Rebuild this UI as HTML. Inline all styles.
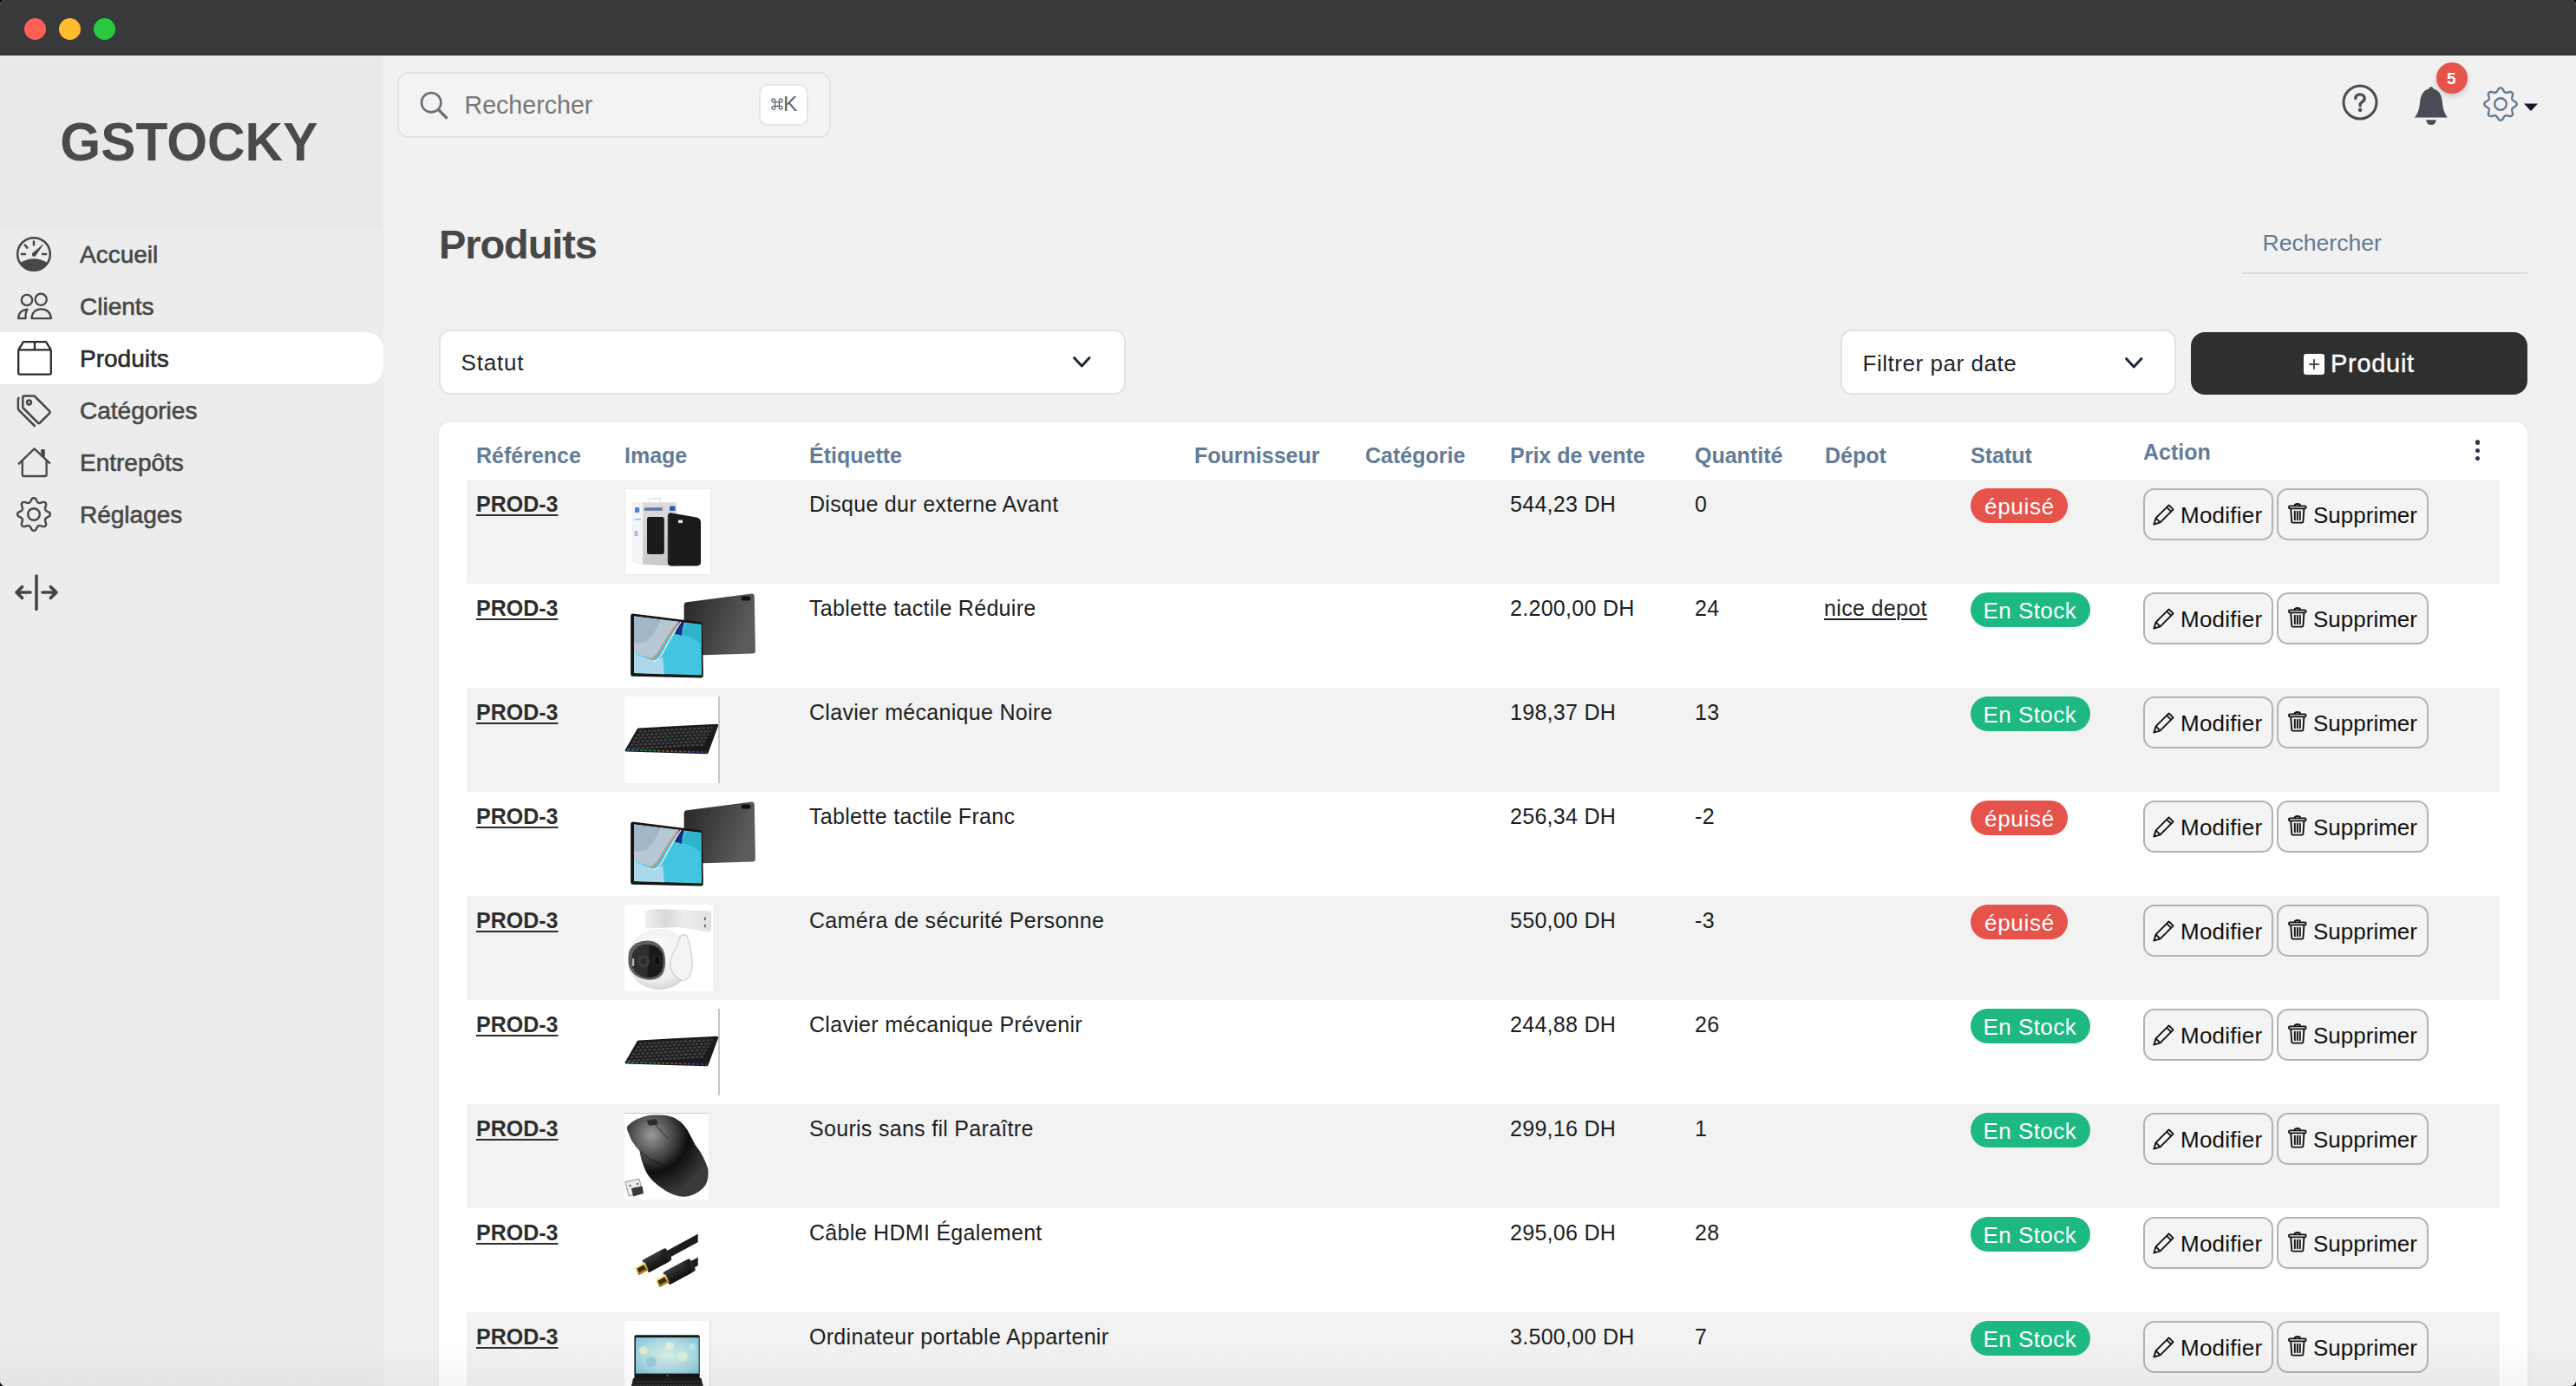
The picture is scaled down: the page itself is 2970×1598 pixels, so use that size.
<!DOCTYPE html>
<html><head><meta charset="utf-8">
<style>
*{box-sizing:border-box;margin:0;padding:0}
html,body{width:2970px;height:1598px;overflow:hidden;background:#000}
body{font-family:"Liberation Sans",sans-serif;position:relative}
.win{position:absolute;left:0;top:0;width:2970px;height:1598px;background:#f1f1f1;border-radius:6px;overflow:hidden}
.a{position:absolute}
.t{position:absolute;white-space:nowrap;line-height:1}
svg{position:absolute;overflow:visible}
.tl{position:absolute;top:21px;width:25px;height:25px;border-radius:50%}
</style></head><body>
<div class="win">
<div class="a" style="left:0;top:0;width:2970px;height:64px;background:#38393b;border-bottom:1px solid #29292b"></div>
<div class="tl" style="left:28px;background:#fe5f57"></div>
<div class="tl" style="left:68px;background:#febc2e"></div>
<div class="tl" style="left:108px;background:#28c840"></div>
<div class="a" style="left:0;top:64px;width:2970px;height:1px;background:#f3f3f3"></div>
<div class="a" style="left:0;top:65px;width:442px;height:1533px;background:#ececec"></div>
<div class="a" style="left:0;top:65px;width:442px;height:198px;background:#e9e9e9"></div>
<div class="t" style="left:69.3px;top:134.4px;font-size:60.3px;font-weight:bold;color:#4a4a4a;transform:scaleY(1.035);transform-origin:0 51px">GSTOCKY</div>
<div class="a" style="left:-20px;top:383px;width:462px;height:60px;background:#fff;border-radius:20px"></div>
<div class="t" style="left:92.0px;top:279.9px;font-size:28px;font-weight:normal;color:#474747;-webkit-text-stroke:0.6px #474747">Accueil</div>
<div class="t" style="left:92.0px;top:339.9px;font-size:28px;font-weight:normal;color:#474747;-webkit-text-stroke:0.6px #474747">Clients</div>
<div class="t" style="left:92.0px;top:399.9px;font-size:28px;font-weight:normal;color:#2b2b2b;-webkit-text-stroke:0.6px #2b2b2b">Produits</div>
<div class="t" style="left:92.0px;top:459.9px;font-size:28px;font-weight:normal;color:#474747;-webkit-text-stroke:0.6px #474747">Catégories</div>
<div class="t" style="left:92.0px;top:519.9px;font-size:28px;font-weight:normal;color:#474747;-webkit-text-stroke:0.6px #474747">Entrepôts</div>
<div class="t" style="left:92.0px;top:579.9px;font-size:28px;font-weight:normal;color:#474747;-webkit-text-stroke:0.6px #474747">Réglages</div>
<svg style="left:19.2px;top:273px" width="40" height="40" viewBox="0 0 40 40" fill="none" stroke="#474747" stroke-width="2.5" stroke-linecap="round">
<circle cx="20" cy="20" r="18.8"/>
<path d="M4.1 30 Q20 20.6 35.9 30 A18.8 18.8 0 0 1 4.1 30 Z" fill="#474747" stroke="none"/>
<circle cx="20" cy="20.8" r="2.1" fill="#474747" stroke="none"/><path d="M18.4 19.6 L21.5 22.1 L30 9.8 Z" stroke-width="1" stroke-linejoin="round" fill="#474747"/>
<path d="M20 5.6 V9.6 M5.8 20 H10 M30 20 H34.2 M9.8 9.5 L12.4 12.6"/>
</svg>
<svg style="left:19.6px;top:333px" width="40" height="40" viewBox="0 0 40 40" fill="none" stroke="#474747" stroke-width="2.3" stroke-linejoin="round">
<circle cx="11" cy="13" r="6.2"/>
<circle cx="27.2" cy="12.3" r="6.6"/>
<path d="M16.6 34.2 C16.6 27.5 21 23.4 27.6 23.4 C34 23.4 38.8 27.5 38.8 34.2 Z"/>
<path d="M1.2 34.2 C1.2 28.2 5 24.2 11.5 23.6 C9.6 26.8 9.2 30.5 9.6 34.2 Z"/>
</svg>
<svg style="left:19.6px;top:393px" width="40" height="40" viewBox="0 0 40 40" fill="none" stroke="#2b2b2b" stroke-width="2.3" stroke-linejoin="round">
<path d="M1.2 10.3 L7 1.2 H33 L38.8 10.3"/>
<rect x="1.2" y="10.3" width="37.6" height="28.3" rx="1.6"/>
<path d="M20 1.2 V10.3"/>
</svg>
<svg style="left:19.6px;top:453px" width="40" height="40" viewBox="0 0 40 40" fill="none" stroke="#474747" stroke-width="2.5" stroke-linejoin="round" stroke-linecap="round">
<path d="M6.3 5 Q6.3 3.5 7.8 3.5 H19.6 L37.2 21.1 Q38.2 22.2 37.2 23.3 L26 34.5 Q24.9 35.5 23.8 34.5 L6.3 17 Z"/>
<circle cx="13.5" cy="11" r="2.4"/>
<path d="M1.5 5.8 Q0.9 6.4 0.9 8 V17.4 Q0.9 19 2.2 20.3 L19.9 38"/>
</svg>
<svg style="left:19.6px;top:513px" width="40" height="40" viewBox="0 0 40 40" fill="none" stroke="#474747" stroke-width="2.3" stroke-linejoin="round" stroke-linecap="round">
<path d="M1.8 21.6 L19.6 4.4 L37.2 20.9"/>
<path d="M5.8 18 V34.6 Q5.8 36 7.2 36 H32.2 Q33.6 36 33.6 34.6 V18"/>
<rect x="27.2" y="5" width="4.6" height="9" rx="1" fill="#474747" stroke="none"/>
</svg>
<svg style="left:19px;top:573px" width="40" height="40" viewBox="0 0 40 40" fill="none" stroke="#474747" stroke-width="2.4" stroke-linejoin="round">
<path d="M20.00 1.10 L20.37 1.13 L20.74 1.21 L21.10 1.35 L21.45 1.54 L21.79 1.79 L22.12 2.09 L22.43 2.46 L22.71 2.91 L22.94 3.54 L23.18 4.01 L23.42 4.43 L23.64 4.82 L23.87 5.18 L24.09 5.51 L24.31 5.81 L24.53 6.07 L24.75 6.31 L24.98 6.50 L25.22 6.66 L25.47 6.79 L25.74 6.88 L26.02 6.93 L26.33 6.96 L26.65 6.95 L26.99 6.92 L27.36 6.86 L27.75 6.78 L28.16 6.69 L28.59 6.58 L29.06 6.45 L29.56 6.29 L30.17 6.00 L30.69 5.88 L31.16 5.84 L31.61 5.85 L32.02 5.92 L32.41 6.03 L32.76 6.19 L33.08 6.39 L33.36 6.64 L33.61 6.92 L33.81 7.24 L33.97 7.59 L34.08 7.98 L34.15 8.39 L34.16 8.84 L34.12 9.31 L34.00 9.83 L33.71 10.44 L33.55 10.94 L33.42 11.41 L33.31 11.84 L33.22 12.25 L33.14 12.64 L33.08 13.01 L33.05 13.35 L33.04 13.67 L33.07 13.98 L33.12 14.26 L33.21 14.53 L33.34 14.78 L33.50 15.02 L33.69 15.25 L33.93 15.47 L34.19 15.69 L34.49 15.91 L34.82 16.13 L35.18 16.36 L35.57 16.58 L35.99 16.82 L36.46 17.06 L37.09 17.29 L37.54 17.57 L37.91 17.88 L38.21 18.21 L38.46 18.55 L38.65 18.90 L38.79 19.26 L38.87 19.63 L38.90 20.00 L38.87 20.37 L38.79 20.74 L38.65 21.10 L38.46 21.45 L38.21 21.79 L37.91 22.12 L37.54 22.43 L37.09 22.71 L36.46 22.94 L35.99 23.18 L35.57 23.42 L35.18 23.64 L34.82 23.87 L34.49 24.09 L34.19 24.31 L33.93 24.53 L33.69 24.75 L33.50 24.98 L33.34 25.22 L33.21 25.47 L33.12 25.74 L33.07 26.02 L33.04 26.33 L33.05 26.65 L33.08 26.99 L33.14 27.36 L33.22 27.75 L33.31 28.16 L33.42 28.59 L33.55 29.06 L33.71 29.56 L34.00 30.17 L34.12 30.69 L34.16 31.16 L34.15 31.61 L34.08 32.02 L33.97 32.41 L33.81 32.76 L33.61 33.08 L33.36 33.36 L33.08 33.61 L32.76 33.81 L32.41 33.97 L32.02 34.08 L31.61 34.15 L31.16 34.16 L30.69 34.12 L30.17 34.00 L29.56 33.71 L29.06 33.55 L28.59 33.42 L28.16 33.31 L27.75 33.22 L27.36 33.14 L26.99 33.08 L26.65 33.05 L26.33 33.04 L26.02 33.07 L25.74 33.12 L25.47 33.21 L25.22 33.34 L24.98 33.50 L24.75 33.69 L24.53 33.93 L24.31 34.19 L24.09 34.49 L23.87 34.82 L23.64 35.18 L23.42 35.57 L23.18 35.99 L22.94 36.46 L22.71 37.09 L22.43 37.54 L22.12 37.91 L21.79 38.21 L21.45 38.46 L21.10 38.65 L20.74 38.79 L20.37 38.87 L20.00 38.90 L19.63 38.87 L19.26 38.79 L18.90 38.65 L18.55 38.46 L18.21 38.21 L17.88 37.91 L17.57 37.54 L17.29 37.09 L17.06 36.46 L16.82 35.99 L16.58 35.57 L16.36 35.18 L16.13 34.82 L15.91 34.49 L15.69 34.19 L15.47 33.93 L15.25 33.69 L15.02 33.50 L14.78 33.34 L14.53 33.21 L14.26 33.12 L13.98 33.07 L13.67 33.04 L13.35 33.05 L13.01 33.08 L12.64 33.14 L12.25 33.22 L11.84 33.31 L11.41 33.42 L10.94 33.55 L10.44 33.71 L9.83 34.00 L9.31 34.12 L8.84 34.16 L8.39 34.15 L7.98 34.08 L7.59 33.97 L7.24 33.81 L6.92 33.61 L6.64 33.36 L6.39 33.08 L6.19 32.76 L6.03 32.41 L5.92 32.02 L5.85 31.61 L5.84 31.16 L5.88 30.69 L6.00 30.17 L6.29 29.56 L6.45 29.06 L6.58 28.59 L6.69 28.16 L6.78 27.75 L6.86 27.36 L6.92 26.99 L6.95 26.65 L6.96 26.33 L6.93 26.02 L6.88 25.74 L6.79 25.47 L6.66 25.22 L6.50 24.98 L6.31 24.75 L6.07 24.53 L5.81 24.31 L5.51 24.09 L5.18 23.87 L4.82 23.64 L4.43 23.42 L4.01 23.18 L3.54 22.94 L2.91 22.71 L2.46 22.43 L2.09 22.12 L1.79 21.79 L1.54 21.45 L1.35 21.10 L1.21 20.74 L1.13 20.37 L1.10 20.00 L1.13 19.63 L1.21 19.26 L1.35 18.90 L1.54 18.55 L1.79 18.21 L2.09 17.88 L2.46 17.57 L2.91 17.29 L3.54 17.06 L4.01 16.82 L4.43 16.58 L4.82 16.36 L5.18 16.13 L5.51 15.91 L5.81 15.69 L6.07 15.47 L6.31 15.25 L6.50 15.02 L6.66 14.78 L6.79 14.53 L6.88 14.26 L6.93 13.98 L6.96 13.67 L6.95 13.35 L6.92 13.01 L6.86 12.64 L6.78 12.25 L6.69 11.84 L6.58 11.41 L6.45 10.94 L6.29 10.44 L6.00 9.83 L5.88 9.31 L5.84 8.84 L5.85 8.39 L5.92 7.98 L6.03 7.59 L6.19 7.24 L6.39 6.92 L6.64 6.64 L6.92 6.39 L7.24 6.19 L7.59 6.03 L7.98 5.92 L8.39 5.85 L8.84 5.84 L9.31 5.88 L9.83 6.00 L10.44 6.29 L10.94 6.45 L11.41 6.58 L11.84 6.69 L12.25 6.78 L12.64 6.86 L13.01 6.92 L13.35 6.95 L13.67 6.96 L13.98 6.93 L14.26 6.88 L14.53 6.79 L14.78 6.66 L15.02 6.50 L15.25 6.31 L15.47 6.07 L15.69 5.81 L15.91 5.51 L16.13 5.18 L16.36 4.82 L16.58 4.43 L16.82 4.01 L17.06 3.54 L17.29 2.91 L17.57 2.46 L17.88 2.09 L18.21 1.79 L18.55 1.54 L18.90 1.35 L19.26 1.21 L19.63 1.13 Z"/>
<circle cx="20" cy="20" r="6.8"/>
</svg>
<svg style="left:0;top:640px" width="100" height="100" viewBox="0 0 100 100" fill="none" stroke="#444" stroke-width="3.6" stroke-linecap="round" stroke-linejoin="round">
<path d="M42 24 V62.5"/>
<path d="M35 43 H19.5 M25.6 36.6 L19 43 L25.6 49.4"/>
<path d="M49 43 H64.5 M58.4 36.6 L65 43 L58.4 49.4"/>
</svg>
<div class="a" style="left:458px;top:83px;width:500px;height:76px;border:2px solid #dfe3e8;border-radius:13px;background:#f3f3f3"></div>
<svg style="left:484px;top:105px" width="34" height="34" viewBox="0 0 34 34" fill="none" stroke="#68717c" stroke-width="2.6" stroke-linecap="round">
<circle cx="13.2" cy="13.2" r="11.2"/><path d="M21.4 21.4 L30.6 30.6" stroke-width="3.4"/></svg>
<div class="t" style="left:535.5px;top:107.2px;font-size:28.6px;font-weight:normal;color:#777;">Rechercher</div>
<div class="a" style="left:875px;top:97px;width:57px;height:48px;border:2px solid #e3e6ea;border-radius:10px;background:#fff"></div>
<svg style="left:889px;top:112.5px" width="14" height="14" viewBox="0 0 14 14" fill="none" stroke="#5b6570" stroke-width="1.3"><path d="M4.6 4.6 V3.2 A1.9 1.9 0 1 0 3.2 4.6 H10.8 A1.9 1.9 0 1 0 9.4 3.2 V10.8 A1.9 1.9 0 1 0 10.8 9.4 H3.2 A1.9 1.9 0 1 0 4.6 10.8 Z"/></svg>
<div class="t" style="left:903.0px;top:108.1px;font-size:24.5px;font-weight:normal;color:#5b6570;">K</div>
<svg style="left:2700px;top:97px" width="42" height="42" viewBox="0 0 42 42" fill="none" stroke="#474c55" stroke-width="3">
<circle cx="21" cy="21" r="19"/>
<path d="M15.8 16.4 C15.8 13.6 18 11.9 21 11.9 C24 11.9 26.2 13.8 26.2 16.4 C26.2 18.8 24.4 19.8 23 20.8 C21.8 21.6 21.2 22.4 21.2 24 V24.8" stroke-width="3.4" stroke-linecap="round"/>
<circle cx="21.1" cy="29.8" r="2.3" fill="#474c55" stroke="none"/>
</svg>
<svg style="left:2784px;top:100px" width="38" height="45" viewBox="0 0 38 45">
<path fill="#474c55" d="M19 0 C17.6 0 16.6 1 16.6 2.3 C10.2 4 7 9 6.2 17 C5.4 26 3.6 31 0 35.6 H38 C34.4 31 32.6 26 31.8 17 C31 9 27.8 4 21.4 2.3 C21.4 1 20.4 0 19 0 Z"/>
<path fill="#474c55" d="M13.2 38.3 H24.8 A5.8 5.8 0 0 1 13.2 38.3 Z"/>
</svg>
<div class="a" style="left:2809px;top:72px;width:36px;height:36px;border-radius:50%;background:#e5534b;box-shadow:0 3px 6px rgba(0,0,0,0.18)"></div>
<div class="t" style="left:2821.0px;top:80.9px;font-size:19px;font-weight:bold;color:#fff;">5</div>
<svg style="left:2863px;top:100px" width="40" height="40" viewBox="0 0 40 40" fill="none" stroke="#647a93" stroke-width="2.4" stroke-linejoin="round">
<path d="M20.00 1.30 L20.37 1.33 L20.73 1.40 L21.09 1.53 L21.44 1.70 L21.78 1.93 L22.11 2.20 L22.42 2.52 L22.71 2.92 L22.95 3.50 L23.19 3.96 L23.43 4.36 L23.67 4.72 L23.90 5.06 L24.13 5.37 L24.35 5.66 L24.58 5.91 L24.81 6.13 L25.05 6.32 L25.29 6.48 L25.55 6.60 L25.82 6.70 L26.10 6.76 L26.41 6.79 L26.73 6.80 L27.07 6.78 L27.43 6.74 L27.81 6.68 L28.21 6.60 L28.63 6.51 L29.09 6.40 L29.59 6.25 L30.17 6.01 L30.65 5.93 L31.10 5.92 L31.52 5.96 L31.92 6.04 L32.29 6.17 L32.63 6.33 L32.95 6.54 L33.22 6.78 L33.46 7.05 L33.67 7.37 L33.83 7.71 L33.96 8.08 L34.04 8.48 L34.08 8.90 L34.07 9.35 L33.99 9.83 L33.75 10.41 L33.60 10.91 L33.49 11.37 L33.40 11.79 L33.32 12.19 L33.26 12.57 L33.22 12.93 L33.20 13.27 L33.21 13.59 L33.24 13.90 L33.30 14.18 L33.40 14.45 L33.52 14.71 L33.68 14.95 L33.87 15.19 L34.09 15.42 L34.34 15.65 L34.63 15.87 L34.94 16.10 L35.28 16.33 L35.64 16.57 L36.04 16.81 L36.50 17.05 L37.08 17.29 L37.48 17.58 L37.80 17.89 L38.07 18.22 L38.30 18.56 L38.47 18.91 L38.60 19.27 L38.67 19.63 L38.70 20.00 L38.67 20.37 L38.60 20.73 L38.47 21.09 L38.30 21.44 L38.07 21.78 L37.80 22.11 L37.48 22.42 L37.08 22.71 L36.50 22.95 L36.04 23.19 L35.64 23.43 L35.28 23.67 L34.94 23.90 L34.63 24.13 L34.34 24.35 L34.09 24.58 L33.87 24.81 L33.68 25.05 L33.52 25.29 L33.40 25.55 L33.30 25.82 L33.24 26.10 L33.21 26.41 L33.20 26.73 L33.22 27.07 L33.26 27.43 L33.32 27.81 L33.40 28.21 L33.49 28.63 L33.60 29.09 L33.75 29.59 L33.99 30.17 L34.07 30.65 L34.08 31.10 L34.04 31.52 L33.96 31.92 L33.83 32.29 L33.67 32.63 L33.46 32.95 L33.22 33.22 L32.95 33.46 L32.63 33.67 L32.29 33.83 L31.92 33.96 L31.52 34.04 L31.10 34.08 L30.65 34.07 L30.17 33.99 L29.59 33.75 L29.09 33.60 L28.63 33.49 L28.21 33.40 L27.81 33.32 L27.43 33.26 L27.07 33.22 L26.73 33.20 L26.41 33.21 L26.10 33.24 L25.82 33.30 L25.55 33.40 L25.29 33.52 L25.05 33.68 L24.81 33.87 L24.58 34.09 L24.35 34.34 L24.13 34.63 L23.90 34.94 L23.67 35.28 L23.43 35.64 L23.19 36.04 L22.95 36.50 L22.71 37.08 L22.42 37.48 L22.11 37.80 L21.78 38.07 L21.44 38.30 L21.09 38.47 L20.73 38.60 L20.37 38.67 L20.00 38.70 L19.63 38.67 L19.27 38.60 L18.91 38.47 L18.56 38.30 L18.22 38.07 L17.89 37.80 L17.58 37.48 L17.29 37.08 L17.05 36.50 L16.81 36.04 L16.57 35.64 L16.33 35.28 L16.10 34.94 L15.87 34.63 L15.65 34.34 L15.42 34.09 L15.19 33.87 L14.95 33.68 L14.71 33.52 L14.45 33.40 L14.18 33.30 L13.90 33.24 L13.59 33.21 L13.27 33.20 L12.93 33.22 L12.57 33.26 L12.19 33.32 L11.79 33.40 L11.37 33.49 L10.91 33.60 L10.41 33.75 L9.83 33.99 L9.35 34.07 L8.90 34.08 L8.48 34.04 L8.08 33.96 L7.71 33.83 L7.37 33.67 L7.05 33.46 L6.78 33.22 L6.54 32.95 L6.33 32.63 L6.17 32.29 L6.04 31.92 L5.96 31.52 L5.92 31.10 L5.93 30.65 L6.01 30.17 L6.25 29.59 L6.40 29.09 L6.51 28.63 L6.60 28.21 L6.68 27.81 L6.74 27.43 L6.78 27.07 L6.80 26.73 L6.79 26.41 L6.76 26.10 L6.70 25.82 L6.60 25.55 L6.48 25.29 L6.32 25.05 L6.13 24.81 L5.91 24.58 L5.66 24.35 L5.37 24.13 L5.06 23.90 L4.72 23.67 L4.36 23.43 L3.96 23.19 L3.50 22.95 L2.92 22.71 L2.52 22.42 L2.20 22.11 L1.93 21.78 L1.70 21.44 L1.53 21.09 L1.40 20.73 L1.33 20.37 L1.30 20.00 L1.33 19.63 L1.40 19.27 L1.53 18.91 L1.70 18.56 L1.93 18.22 L2.20 17.89 L2.52 17.58 L2.92 17.29 L3.50 17.05 L3.96 16.81 L4.36 16.57 L4.72 16.33 L5.06 16.10 L5.37 15.87 L5.66 15.65 L5.91 15.42 L6.13 15.19 L6.32 14.95 L6.48 14.71 L6.60 14.45 L6.70 14.18 L6.76 13.90 L6.79 13.59 L6.80 13.27 L6.78 12.93 L6.74 12.57 L6.68 12.19 L6.60 11.79 L6.51 11.37 L6.40 10.91 L6.25 10.41 L6.01 9.83 L5.93 9.35 L5.92 8.90 L5.96 8.48 L6.04 8.08 L6.17 7.71 L6.33 7.37 L6.54 7.05 L6.78 6.78 L7.05 6.54 L7.37 6.33 L7.71 6.17 L8.08 6.04 L8.48 5.96 L8.90 5.92 L9.35 5.93 L9.83 6.01 L10.41 6.25 L10.91 6.40 L11.37 6.51 L11.79 6.60 L12.19 6.68 L12.57 6.74 L12.93 6.78 L13.27 6.80 L13.59 6.79 L13.90 6.76 L14.18 6.70 L14.45 6.60 L14.71 6.48 L14.95 6.32 L15.19 6.13 L15.42 5.91 L15.65 5.66 L15.87 5.37 L16.10 5.06 L16.33 4.72 L16.57 4.36 L16.81 3.96 L17.05 3.50 L17.29 2.92 L17.58 2.52 L17.89 2.20 L18.22 1.93 L18.56 1.70 L18.91 1.53 L19.27 1.40 L19.63 1.33 Z"/>
<circle cx="20" cy="20" r="6.8"/>
</svg>
<svg style="left:2909px;top:119px" width="18" height="10" viewBox="0 0 18 10"><path d="M1 0.5 H17 L9 9 Z" fill="#111827"/></svg>
<div class="t" style="left:506.0px;top:258.1px;font-size:47px;font-weight:bold;color:#474747;letter-spacing:-1.1px">Produits</div>
<div class="t" style="left:2608.5px;top:266.7px;font-size:26.6px;font-weight:normal;color:#5f7a96;">Rechercher</div>
<div class="a" style="left:2585px;top:314px;width:329px;height:2px;background:#dcdcdc"></div>
<div class="a" style="left:506px;top:380px;width:792px;height:75px;border:2px solid #dfe2e7;border-radius:13px;background:#fff"></div>
<div class="t" style="left:531.5px;top:405.0px;font-size:26px;font-weight:normal;color:#1f2328;letter-spacing:0.8px">Statut</div>
<svg style="left:1237px;top:411px" width="24" height="16" viewBox="0 0 24 16" fill="none" stroke="#1f2937" stroke-width="3" stroke-linecap="round" stroke-linejoin="round"><path d="M1.5 1.5 L10.25 11 L19 1.5"/></svg>
<div class="a" style="left:2122px;top:380px;width:387px;height:75px;border:2px solid #dfe2e7;border-radius:13px;background:#fff"></div>
<div class="t" style="left:2147.5px;top:405.5px;font-size:26px;font-weight:normal;color:#1f2328;letter-spacing:0.55px">Filtrer par date</div>
<svg style="left:2449.5px;top:411.5px" width="24" height="16" viewBox="0 0 24 16" fill="none" stroke="#1f2937" stroke-width="3" stroke-linecap="round" stroke-linejoin="round"><path d="M1.5 1.5 L10.25 11 L19 1.5"/></svg>
<div class="a" style="left:2526px;top:383px;width:388px;height:72px;border-radius:16px;background:#2f2f2f"></div>
<div class="a" style="left:2656px;top:408px;width:24px;height:24px;border-radius:3px;background:#fff"></div>
<svg style="left:2656px;top:408px" width="24" height="24" viewBox="0 0 24 24" stroke="#484848" stroke-width="1.9"><path d="M12 6.3 V17.8 M6.3 12 H17.8"/></svg>
<div class="t" style="left:2687.0px;top:404.5px;font-size:29px;font-weight:normal;color:#fff;letter-spacing:0.7px;-webkit-text-stroke:0.4px #fff">Produit</div>
<div class="a" style="left:506px;top:487px;width:2408px;height:1200px;border-radius:13px;background:#fff;box-shadow:0 0 10px rgba(0,0,0,0.035)"></div>
<div class="t" style="left:549.0px;top:512.8px;font-size:25px;font-weight:bold;color:#627c97;">Référence</div>
<div class="t" style="left:720.0px;top:512.8px;font-size:25px;font-weight:bold;color:#627c97;">Image</div>
<div class="t" style="left:933.0px;top:512.8px;font-size:25px;font-weight:bold;color:#627c97;">Étiquette</div>
<div class="t" style="left:1377.0px;top:512.8px;font-size:25px;font-weight:bold;color:#627c97;">Fournisseur</div>
<div class="t" style="left:1574.0px;top:512.8px;font-size:25px;font-weight:bold;color:#627c97;">Catégorie</div>
<div class="t" style="left:1741.0px;top:512.8px;font-size:25px;font-weight:bold;color:#627c97;">Prix de vente</div>
<div class="t" style="left:1954.0px;top:512.8px;font-size:25px;font-weight:bold;color:#627c97;">Quantité</div>
<div class="t" style="left:2104.0px;top:512.8px;font-size:25px;font-weight:bold;color:#627c97;">Dépot</div>
<div class="t" style="left:2272.0px;top:512.8px;font-size:25px;font-weight:bold;color:#627c97;">Statut</div>
<div class="t" style="left:2471.0px;top:508.8px;font-size:25px;font-weight:bold;color:#627c97;">Action</div>
<div class="a" style="left:2853.5px;top:507.4px;width:5.2px;height:5.2px;border-radius:50%;background:#2d3748"></div>
<div class="a" style="left:2853.5px;top:516.8px;width:5.2px;height:5.2px;border-radius:50%;background:#2d3748"></div>
<div class="a" style="left:2853.5px;top:525.8px;width:5.2px;height:5.2px;border-radius:50%;background:#2d3748"></div>
<div class="a" style="left:538px;top:553px;width:2344px;height:120px;background:#f2f2f2"></div>
<div class="t" style="left:549.0px;top:568.8px;font-size:25px;font-weight:bold;color:#2d2d2d;text-decoration:underline;text-decoration-thickness:2px;text-underline-offset:3px">PROD-3</div>
<div class="a" style="left:720px;top:563px;width:100px;height:100px;background:#fff;border:1px solid #ececec"></div>
<svg style="left:720px;top:563px" width="100" height="100" viewBox="0 0 100 100">
<defs><linearGradient id="hb553" x1="0" y1="0" x2="0" y2="1"><stop offset="0" stop-color="#dcdcdc"/><stop offset="1" stop-color="#c9c9c9"/></linearGradient></defs>
<path d="M28.3 16.5 V11.8 H41 V16.5" fill="none" stroke="#e2e2e2" stroke-width="1.4"/>
<path d="M9.3 17 L21.2 16.2 L21.2 87.5 L9.8 84.5 Z" fill="#f4f5f7" stroke="#e4e4e4" stroke-width="0.6"/>
<path d="M21.2 16.2 L60 16.2 L60 90 L21.2 87.5 Z" fill="url(#hb553)"/>
<rect x="12" y="22" width="5.2" height="6" rx="1" fill="#4a86c8"/>
<rect x="12" y="35" width="7" height="1.4" fill="#8fb0d8"/><rect x="11.5" y="49" width="4" height="6" fill="#a9c0dc"/>
<rect x="22.8" y="22.2" width="21" height="3.6" fill="#3a5a90" opacity="0.75"/>
<rect x="52" y="20.4" width="6.5" height="5.6" rx="1" fill="#2f5fa8"/>
<rect x="26" y="33" width="19.8" height="43" rx="2.5" fill="#1b1b1b"/>
<path d="M54.5 28.4 L83 33.5 Q88 34.4 88 39.5 L88 85 Q88 89.4 83.5 89.4 L54.5 89.4 Q49.8 89.4 49.8 84.7 L49.8 33 Q49.8 27.6 54.5 28.4 Z" fill="#1a1a1a"/>
<path d="M51.2 32 L51.2 86" stroke="#3a3a3a" stroke-width="1"/>
<rect x="62" y="36.5" width="5" height="3.6" fill="#ddd"/>
</svg>
<div class="t" style="left:933.0px;top:568.8px;font-size:25px;font-weight:normal;color:#1c1e21;letter-spacing:0.3px">Disque dur externe Avant</div>
<div class="t" style="left:1741.0px;top:568.8px;font-size:25px;font-weight:normal;color:#1c1e21;letter-spacing:0.3px">544,23 DH</div>
<div class="t" style="left:1954.0px;top:568.8px;font-size:25px;font-weight:normal;color:#1c1e21;letter-spacing:0.3px">0</div>
<div class="a" style="left:2272px;top:563px;width:112px;height:40px;border-radius:20px;background:#e5534b"></div>
<div class="t" style="left:2288.0px;top:570.5px;font-size:26px;font-weight:normal;color:#fff;letter-spacing:0.7px">épuisé</div>
<div class="a" style="left:2471px;top:563px;width:149.5px;height:59.5px;border:2px solid #b3b3b3;border-radius:13px;background:#f4f4f4"></div>
<div class="a" style="left:2625px;top:563px;width:175px;height:59.5px;border:2px solid #b3b3b3;border-radius:13px;background:#f4f4f4"></div>
<svg style="left:2482px;top:580px" width="26" height="26" viewBox="0 0 26 26" fill="none" stroke="#111" stroke-width="1.9" stroke-linejoin="round"><path d="M1.4 24.6 L3.6 17.4 L18.6 2.4 L23.6 7.4 L8.6 22.4 Z M3.6 17.4 L8.6 22.4 M16.2 4.8 L21.2 9.8"/></svg>
<div class="t" style="left:2514.0px;top:580.5px;font-size:26px;font-weight:normal;color:#111;letter-spacing:0.25px">Modifier</div>
<svg style="left:2638px;top:580px" width="22" height="24" viewBox="0 0 22 24" fill="none" stroke="#111" stroke-width="1.9" stroke-linejoin="round" stroke-linecap="round"><rect x="1" y="3.4" width="19.6" height="3" rx="1.2"/><path d="M7.6 3.2 Q7.6 1 10.8 1 Q14 1 14 3.2"/><path d="M3.2 6.6 L4.2 21.2 Q4.3 22.6 5.7 22.6 H15.9 Q17.3 22.6 17.4 21.2 L18.4 6.6"/><path d="M7.8 9.6 V19.2 M10.8 9.6 V19.2 M13.8 9.6 V19.2"/></svg>
<div class="t" style="left:2667.0px;top:580.5px;font-size:26px;font-weight:normal;color:#111;">Supprimer</div>
<div class="t" style="left:549.0px;top:688.8px;font-size:25px;font-weight:bold;color:#2d2d2d;text-decoration:underline;text-decoration-thickness:2px;text-underline-offset:3px">PROD-3</div>
<svg style="left:720px;top:673px" width="160" height="120" viewBox="0 0 160 120">
<defs><linearGradient id="tb673" x1="0" y1="0" x2="1" y2="0.3"><stop offset="0" stop-color="#262626"/><stop offset="1" stop-color="#5c5c5c"/></linearGradient></defs>
<path d="M68.6 25 Q68.6 21.6 72 21.3 L146.5 11.6 Q149.6 11.3 149.8 14.5 L150.9 77.5 Q151 80.4 148 80.5 L91 82.2 L68.6 80 Z" fill="url(#tb673)"/>
<rect x="134.5" y="14.6" width="11" height="5" rx="2.5" fill="#111"/>
<path d="M9.6 34.6 L87.2 44.2 Q89.8 44.5 89.9 47 L90.8 106 Q90.8 108.6 88.2 108.5 L9.6 106.8 Q7.1 106.7 7.1 104.2 L7.1 37.2 Q7.1 34.4 9.6 34.6 Z" fill="#141414"/>
<path d="M11 37.6 L88.5 47 L89 105.6 L11 103 Z" fill="#42c6df"/>
<path d="M72 45.3 L88.5 47 L88.7 70 Q80 62 66 59 Z" fill="#2eb4cc"/>
<path d="M11 37.6 L63 43.8 Q50 58 40 76 Q35 84 30 86 Q20 84 11 79 Z" fill="#b8c7d3"/>
<path d="M11 37.6 L42 41.4 Q36 56 26 66 Q18 70 11 68 Z" fill="#a3b6c8"/>
<path d="M11 79 Q22 86 34 88 Q40 88 44 84 L46 104.3 L11 103 Z" fill="#a9d9ea"/>
<path d="M63 43.8 L69 44.5 Q66 52 66 60 Q62 58 58 58 Z" fill="#1d2a7a"/>
<path d="M62.5 43.8 Q50 60 42 76 Q36 86 30 87" fill="none" stroke="#e58a5c" stroke-width="1.6"/>
<path d="M65 44.2 Q53 62 45 78 Q40 88 33 90" fill="none" stroke="#f2f4f8" stroke-width="1.2"/>
</svg>
<div class="t" style="left:933.0px;top:688.8px;font-size:25px;font-weight:normal;color:#1c1e21;letter-spacing:0.3px">Tablette tactile Réduire</div>
<div class="t" style="left:1741.0px;top:688.8px;font-size:25px;font-weight:normal;color:#1c1e21;letter-spacing:0.3px">2.200,00 DH</div>
<div class="t" style="left:1954.0px;top:688.8px;font-size:25px;font-weight:normal;color:#1c1e21;letter-spacing:0.3px">24</div>
<div class="t" style="left:2103.0px;top:688.8px;font-size:25px;font-weight:normal;color:#1c1e21;letter-spacing:0.35px;text-decoration:underline;text-decoration-thickness:2px;text-underline-offset:3px">nice depot</div>
<div class="a" style="left:2272px;top:683px;width:138px;height:40px;border-radius:20px;background:#1db981"></div>
<div class="t" style="left:2286.5px;top:690.5px;font-size:26px;font-weight:normal;color:#fff;letter-spacing:0.45px">En Stock</div>
<div class="a" style="left:2471px;top:683px;width:149.5px;height:59.5px;border:2px solid #b3b3b3;border-radius:13px;background:#f4f4f4"></div>
<div class="a" style="left:2625px;top:683px;width:175px;height:59.5px;border:2px solid #b3b3b3;border-radius:13px;background:#f4f4f4"></div>
<svg style="left:2482px;top:700px" width="26" height="26" viewBox="0 0 26 26" fill="none" stroke="#111" stroke-width="1.9" stroke-linejoin="round"><path d="M1.4 24.6 L3.6 17.4 L18.6 2.4 L23.6 7.4 L8.6 22.4 Z M3.6 17.4 L8.6 22.4 M16.2 4.8 L21.2 9.8"/></svg>
<div class="t" style="left:2514.0px;top:700.5px;font-size:26px;font-weight:normal;color:#111;letter-spacing:0.25px">Modifier</div>
<svg style="left:2638px;top:700px" width="22" height="24" viewBox="0 0 22 24" fill="none" stroke="#111" stroke-width="1.9" stroke-linejoin="round" stroke-linecap="round"><rect x="1" y="3.4" width="19.6" height="3" rx="1.2"/><path d="M7.6 3.2 Q7.6 1 10.8 1 Q14 1 14 3.2"/><path d="M3.2 6.6 L4.2 21.2 Q4.3 22.6 5.7 22.6 H15.9 Q17.3 22.6 17.4 21.2 L18.4 6.6"/><path d="M7.8 9.6 V19.2 M10.8 9.6 V19.2 M13.8 9.6 V19.2"/></svg>
<div class="t" style="left:2667.0px;top:700.5px;font-size:26px;font-weight:normal;color:#111;">Supprimer</div>
<div class="a" style="left:538px;top:793px;width:2344px;height:120px;background:#f2f2f2"></div>
<div class="t" style="left:549.0px;top:808.8px;font-size:25px;font-weight:bold;color:#2d2d2d;text-decoration:underline;text-decoration-thickness:2px;text-underline-offset:3px">PROD-3</div>
<div class="a" style="left:720px;top:803px;width:110px;height:100px;background:#fff;border-right:2px solid #c6c6c6"></div>
<svg style="left:720px;top:803px" width="110" height="100" viewBox="0 0 110 100">
<path d="M16.5 36.4 L106.2 31.7 Q108.6 31.6 108 34 L96.6 65 Q96 66.4 94.4 66.3 L2 63.4 Q-0.2 63.2 0.8 61.4 L14.6 37.6 Q15.3 36.5 16.5 36.4 Z" fill="#1a1a1b"/>
<path d="M16.7 40.5 L101.5 36.1" stroke="#404044" stroke-width="2.6" stroke-dasharray="3.6 1.6"/><path d="M14.2 44.4 L99.4 40.0" stroke="#404044" stroke-width="2.6" stroke-dasharray="3.6 1.6"/><path d="M11.7 48.3 L97.3 43.8" stroke="#404044" stroke-width="2.6" stroke-dasharray="3.6 1.6"/><path d="M9.2 52.2 L95.2 47.7" stroke="#404044" stroke-width="2.6" stroke-dasharray="3.6 1.6"/><path d="M6.7 56.1 L93.1 51.6" stroke="#404044" stroke-width="2.6" stroke-dasharray="3.6 1.6"/><path d="M4.2 60.0 L91.0 55.5" stroke="#404044" stroke-width="2.6" stroke-dasharray="3.6 1.6"/>
<path d="M3 61.6 L95 64.2" stroke="url(#rgb793)" stroke-width="1.6" stroke-dasharray="3 2" opacity="0.8"/>
<defs><linearGradient id="rgb793"><stop offset="0" stop-color="#2a8fd0"/><stop offset=".3" stop-color="#2fb34a"/><stop offset=".55" stop-color="#d2542a"/><stop offset=".8" stop-color="#6a3fd0"/><stop offset="1" stop-color="#2a4fd0"/></linearGradient></defs>
</svg>
<div class="t" style="left:933.0px;top:808.8px;font-size:25px;font-weight:normal;color:#1c1e21;letter-spacing:0.3px">Clavier mécanique Noire</div>
<div class="t" style="left:1741.0px;top:808.8px;font-size:25px;font-weight:normal;color:#1c1e21;letter-spacing:0.3px">198,37 DH</div>
<div class="t" style="left:1954.0px;top:808.8px;font-size:25px;font-weight:normal;color:#1c1e21;letter-spacing:0.3px">13</div>
<div class="a" style="left:2272px;top:803px;width:138px;height:40px;border-radius:20px;background:#1db981"></div>
<div class="t" style="left:2286.5px;top:810.5px;font-size:26px;font-weight:normal;color:#fff;letter-spacing:0.45px">En Stock</div>
<div class="a" style="left:2471px;top:803px;width:149.5px;height:59.5px;border:2px solid #b3b3b3;border-radius:13px;background:#f4f4f4"></div>
<div class="a" style="left:2625px;top:803px;width:175px;height:59.5px;border:2px solid #b3b3b3;border-radius:13px;background:#f4f4f4"></div>
<svg style="left:2482px;top:820px" width="26" height="26" viewBox="0 0 26 26" fill="none" stroke="#111" stroke-width="1.9" stroke-linejoin="round"><path d="M1.4 24.6 L3.6 17.4 L18.6 2.4 L23.6 7.4 L8.6 22.4 Z M3.6 17.4 L8.6 22.4 M16.2 4.8 L21.2 9.8"/></svg>
<div class="t" style="left:2514.0px;top:820.5px;font-size:26px;font-weight:normal;color:#111;letter-spacing:0.25px">Modifier</div>
<svg style="left:2638px;top:820px" width="22" height="24" viewBox="0 0 22 24" fill="none" stroke="#111" stroke-width="1.9" stroke-linejoin="round" stroke-linecap="round"><rect x="1" y="3.4" width="19.6" height="3" rx="1.2"/><path d="M7.6 3.2 Q7.6 1 10.8 1 Q14 1 14 3.2"/><path d="M3.2 6.6 L4.2 21.2 Q4.3 22.6 5.7 22.6 H15.9 Q17.3 22.6 17.4 21.2 L18.4 6.6"/><path d="M7.8 9.6 V19.2 M10.8 9.6 V19.2 M13.8 9.6 V19.2"/></svg>
<div class="t" style="left:2667.0px;top:820.5px;font-size:26px;font-weight:normal;color:#111;">Supprimer</div>
<div class="t" style="left:549.0px;top:928.8px;font-size:25px;font-weight:bold;color:#2d2d2d;text-decoration:underline;text-decoration-thickness:2px;text-underline-offset:3px">PROD-3</div>
<svg style="left:720px;top:913px" width="160" height="120" viewBox="0 0 160 120">
<defs><linearGradient id="tb913" x1="0" y1="0" x2="1" y2="0.3"><stop offset="0" stop-color="#262626"/><stop offset="1" stop-color="#5c5c5c"/></linearGradient></defs>
<path d="M68.6 25 Q68.6 21.6 72 21.3 L146.5 11.6 Q149.6 11.3 149.8 14.5 L150.9 77.5 Q151 80.4 148 80.5 L91 82.2 L68.6 80 Z" fill="url(#tb913)"/>
<rect x="134.5" y="14.6" width="11" height="5" rx="2.5" fill="#111"/>
<path d="M9.6 34.6 L87.2 44.2 Q89.8 44.5 89.9 47 L90.8 106 Q90.8 108.6 88.2 108.5 L9.6 106.8 Q7.1 106.7 7.1 104.2 L7.1 37.2 Q7.1 34.4 9.6 34.6 Z" fill="#141414"/>
<path d="M11 37.6 L88.5 47 L89 105.6 L11 103 Z" fill="#42c6df"/>
<path d="M72 45.3 L88.5 47 L88.7 70 Q80 62 66 59 Z" fill="#2eb4cc"/>
<path d="M11 37.6 L63 43.8 Q50 58 40 76 Q35 84 30 86 Q20 84 11 79 Z" fill="#b8c7d3"/>
<path d="M11 37.6 L42 41.4 Q36 56 26 66 Q18 70 11 68 Z" fill="#a3b6c8"/>
<path d="M11 79 Q22 86 34 88 Q40 88 44 84 L46 104.3 L11 103 Z" fill="#a9d9ea"/>
<path d="M63 43.8 L69 44.5 Q66 52 66 60 Q62 58 58 58 Z" fill="#1d2a7a"/>
<path d="M62.5 43.8 Q50 60 42 76 Q36 86 30 87" fill="none" stroke="#e58a5c" stroke-width="1.6"/>
<path d="M65 44.2 Q53 62 45 78 Q40 88 33 90" fill="none" stroke="#f2f4f8" stroke-width="1.2"/>
</svg>
<div class="t" style="left:933.0px;top:928.8px;font-size:25px;font-weight:normal;color:#1c1e21;letter-spacing:0.3px">Tablette tactile Franc</div>
<div class="t" style="left:1741.0px;top:928.8px;font-size:25px;font-weight:normal;color:#1c1e21;letter-spacing:0.3px">256,34 DH</div>
<div class="t" style="left:1954.0px;top:928.8px;font-size:25px;font-weight:normal;color:#1c1e21;letter-spacing:0.3px">-2</div>
<div class="a" style="left:2272px;top:923px;width:112px;height:40px;border-radius:20px;background:#e5534b"></div>
<div class="t" style="left:2288.0px;top:930.5px;font-size:26px;font-weight:normal;color:#fff;letter-spacing:0.7px">épuisé</div>
<div class="a" style="left:2471px;top:923px;width:149.5px;height:59.5px;border:2px solid #b3b3b3;border-radius:13px;background:#f4f4f4"></div>
<div class="a" style="left:2625px;top:923px;width:175px;height:59.5px;border:2px solid #b3b3b3;border-radius:13px;background:#f4f4f4"></div>
<svg style="left:2482px;top:940px" width="26" height="26" viewBox="0 0 26 26" fill="none" stroke="#111" stroke-width="1.9" stroke-linejoin="round"><path d="M1.4 24.6 L3.6 17.4 L18.6 2.4 L23.6 7.4 L8.6 22.4 Z M3.6 17.4 L8.6 22.4 M16.2 4.8 L21.2 9.8"/></svg>
<div class="t" style="left:2514.0px;top:940.5px;font-size:26px;font-weight:normal;color:#111;letter-spacing:0.25px">Modifier</div>
<svg style="left:2638px;top:940px" width="22" height="24" viewBox="0 0 22 24" fill="none" stroke="#111" stroke-width="1.9" stroke-linejoin="round" stroke-linecap="round"><rect x="1" y="3.4" width="19.6" height="3" rx="1.2"/><path d="M7.6 3.2 Q7.6 1 10.8 1 Q14 1 14 3.2"/><path d="M3.2 6.6 L4.2 21.2 Q4.3 22.6 5.7 22.6 H15.9 Q17.3 22.6 17.4 21.2 L18.4 6.6"/><path d="M7.8 9.6 V19.2 M10.8 9.6 V19.2 M13.8 9.6 V19.2"/></svg>
<div class="t" style="left:2667.0px;top:940.5px;font-size:26px;font-weight:normal;color:#111;">Supprimer</div>
<div class="a" style="left:538px;top:1033px;width:2344px;height:120px;background:#f2f2f2"></div>
<div class="t" style="left:549.0px;top:1048.8px;font-size:25px;font-weight:bold;color:#2d2d2d;text-decoration:underline;text-decoration-thickness:2px;text-underline-offset:3px">PROD-3</div>
<div class="a" style="left:720px;top:1043px;width:102px;height:100px;background:#fff"></div>
<svg style="left:720px;top:1043px" width="102" height="100" viewBox="0 0 102 100">
<defs>
<radialGradient id="dm1033" cx="0.45" cy="0.35" r="0.7"><stop offset="0" stop-color="#fbfbfb"/><stop offset="0.7" stop-color="#eeeeee"/><stop offset="1" stop-color="#cfcfcf"/></radialGradient>
<linearGradient id="arm1033" x1="0" y1="0" x2="1" y2="0"><stop offset="0" stop-color="#f0f0f0"/><stop offset="0.3" stop-color="#d9d9d9"/><stop offset="0.6" stop-color="#ececec"/><stop offset="1" stop-color="#e2e2e2"/></linearGradient>
</defs>
<path d="M23.6 10 Q24 5.5 38 5 L100.2 7.2 L100 30 Q99.5 31.5 97 31.5 L62 26 L24.4 27.5 Z" fill="url(#arm1033)"/>
<rect x="92" y="14.6" width="1.6" height="3.4" fill="#555"/><rect x="92" y="22.8" width="1.6" height="3.4" fill="#555"/>
<path d="M11 50 Q12 36 18 36 L22 40 Z" fill="#e4e4e4"/>
<ellipse cx="40" cy="63" rx="37" ry="35.2" fill="url(#dm1033)"/>
<path d="M60 50 Q52 60 53 72 Q56 84 68 88 Q76 86 78 72 Q79 56 72 36 Q68 33 64 37 Z" fill="#f4f4f4" stroke="#cfcfcf" stroke-width="1.2"/>
<path d="M6 52 Q12 41 28 41.5 Q42 43 46 56 Q49 70 44 80 Q38 88 26 86.5 Q10 84 5.5 72 Q3 62 6 52 Z" fill="#5e5e5e"/>
<path d="M10 55 Q16 45 29 46 Q41 48 44 58 Q46 70 42 78 Q36 85 26 84 Q13 82 9.5 72 Q7.5 63 10 55 Z" fill="#1a1a1a"/>
<path d="M10 55 Q16 45 29 46 L26 84 Q13 82 9.5 72 Q7.5 63 10 55 Z" fill="#2e2e2e"/>
<circle cx="22" cy="65.5" r="7" fill="#3c3c3c"/><circle cx="22" cy="65.5" r="3.5" fill="#2a2a2a"/>
<ellipse cx="37.5" cy="64.5" rx="3.6" ry="5.4" fill="#0c0c0c" stroke="#444" stroke-width="0.8"/>
<rect x="9" y="62" width="2.2" height="9" rx="1" fill="#bdbdbd"/>
</svg>
<div class="t" style="left:933.0px;top:1048.8px;font-size:25px;font-weight:normal;color:#1c1e21;letter-spacing:0.3px">Caméra de sécurité Personne</div>
<div class="t" style="left:1741.0px;top:1048.8px;font-size:25px;font-weight:normal;color:#1c1e21;letter-spacing:0.3px">550,00 DH</div>
<div class="t" style="left:1954.0px;top:1048.8px;font-size:25px;font-weight:normal;color:#1c1e21;letter-spacing:0.3px">-3</div>
<div class="a" style="left:2272px;top:1043px;width:112px;height:40px;border-radius:20px;background:#e5534b"></div>
<div class="t" style="left:2288.0px;top:1050.5px;font-size:26px;font-weight:normal;color:#fff;letter-spacing:0.7px">épuisé</div>
<div class="a" style="left:2471px;top:1043px;width:149.5px;height:59.5px;border:2px solid #b3b3b3;border-radius:13px;background:#f4f4f4"></div>
<div class="a" style="left:2625px;top:1043px;width:175px;height:59.5px;border:2px solid #b3b3b3;border-radius:13px;background:#f4f4f4"></div>
<svg style="left:2482px;top:1060px" width="26" height="26" viewBox="0 0 26 26" fill="none" stroke="#111" stroke-width="1.9" stroke-linejoin="round"><path d="M1.4 24.6 L3.6 17.4 L18.6 2.4 L23.6 7.4 L8.6 22.4 Z M3.6 17.4 L8.6 22.4 M16.2 4.8 L21.2 9.8"/></svg>
<div class="t" style="left:2514.0px;top:1060.5px;font-size:26px;font-weight:normal;color:#111;letter-spacing:0.25px">Modifier</div>
<svg style="left:2638px;top:1060px" width="22" height="24" viewBox="0 0 22 24" fill="none" stroke="#111" stroke-width="1.9" stroke-linejoin="round" stroke-linecap="round"><rect x="1" y="3.4" width="19.6" height="3" rx="1.2"/><path d="M7.6 3.2 Q7.6 1 10.8 1 Q14 1 14 3.2"/><path d="M3.2 6.6 L4.2 21.2 Q4.3 22.6 5.7 22.6 H15.9 Q17.3 22.6 17.4 21.2 L18.4 6.6"/><path d="M7.8 9.6 V19.2 M10.8 9.6 V19.2 M13.8 9.6 V19.2"/></svg>
<div class="t" style="left:2667.0px;top:1060.5px;font-size:26px;font-weight:normal;color:#111;">Supprimer</div>
<div class="t" style="left:549.0px;top:1168.8px;font-size:25px;font-weight:bold;color:#2d2d2d;text-decoration:underline;text-decoration-thickness:2px;text-underline-offset:3px">PROD-3</div>
<div class="a" style="left:720px;top:1163px;width:110px;height:100px;background:#fff;border-right:2px solid #c6c6c6"></div>
<svg style="left:720px;top:1163px" width="110" height="100" viewBox="0 0 110 100">
<path d="M16.5 36.4 L106.2 31.7 Q108.6 31.6 108 34 L96.6 65 Q96 66.4 94.4 66.3 L2 63.4 Q-0.2 63.2 0.8 61.4 L14.6 37.6 Q15.3 36.5 16.5 36.4 Z" fill="#1a1a1b"/>
<path d="M16.7 40.5 L101.5 36.1" stroke="#404044" stroke-width="2.6" stroke-dasharray="3.6 1.6"/><path d="M14.2 44.4 L99.4 40.0" stroke="#404044" stroke-width="2.6" stroke-dasharray="3.6 1.6"/><path d="M11.7 48.3 L97.3 43.8" stroke="#404044" stroke-width="2.6" stroke-dasharray="3.6 1.6"/><path d="M9.2 52.2 L95.2 47.7" stroke="#404044" stroke-width="2.6" stroke-dasharray="3.6 1.6"/><path d="M6.7 56.1 L93.1 51.6" stroke="#404044" stroke-width="2.6" stroke-dasharray="3.6 1.6"/><path d="M4.2 60.0 L91.0 55.5" stroke="#404044" stroke-width="2.6" stroke-dasharray="3.6 1.6"/>
<path d="M3 61.6 L95 64.2" stroke="url(#rgb1153)" stroke-width="1.6" stroke-dasharray="3 2" opacity="0.8"/>
<defs><linearGradient id="rgb1153"><stop offset="0" stop-color="#2a8fd0"/><stop offset=".3" stop-color="#2fb34a"/><stop offset=".55" stop-color="#d2542a"/><stop offset=".8" stop-color="#6a3fd0"/><stop offset="1" stop-color="#2a4fd0"/></linearGradient></defs>
</svg>
<div class="t" style="left:933.0px;top:1168.8px;font-size:25px;font-weight:normal;color:#1c1e21;letter-spacing:0.3px">Clavier mécanique Prévenir</div>
<div class="t" style="left:1741.0px;top:1168.8px;font-size:25px;font-weight:normal;color:#1c1e21;letter-spacing:0.3px">244,88 DH</div>
<div class="t" style="left:1954.0px;top:1168.8px;font-size:25px;font-weight:normal;color:#1c1e21;letter-spacing:0.3px">26</div>
<div class="a" style="left:2272px;top:1163px;width:138px;height:40px;border-radius:20px;background:#1db981"></div>
<div class="t" style="left:2286.5px;top:1170.5px;font-size:26px;font-weight:normal;color:#fff;letter-spacing:0.45px">En Stock</div>
<div class="a" style="left:2471px;top:1163px;width:149.5px;height:59.5px;border:2px solid #b3b3b3;border-radius:13px;background:#f4f4f4"></div>
<div class="a" style="left:2625px;top:1163px;width:175px;height:59.5px;border:2px solid #b3b3b3;border-radius:13px;background:#f4f4f4"></div>
<svg style="left:2482px;top:1180px" width="26" height="26" viewBox="0 0 26 26" fill="none" stroke="#111" stroke-width="1.9" stroke-linejoin="round"><path d="M1.4 24.6 L3.6 17.4 L18.6 2.4 L23.6 7.4 L8.6 22.4 Z M3.6 17.4 L8.6 22.4 M16.2 4.8 L21.2 9.8"/></svg>
<div class="t" style="left:2514.0px;top:1180.5px;font-size:26px;font-weight:normal;color:#111;letter-spacing:0.25px">Modifier</div>
<svg style="left:2638px;top:1180px" width="22" height="24" viewBox="0 0 22 24" fill="none" stroke="#111" stroke-width="1.9" stroke-linejoin="round" stroke-linecap="round"><rect x="1" y="3.4" width="19.6" height="3" rx="1.2"/><path d="M7.6 3.2 Q7.6 1 10.8 1 Q14 1 14 3.2"/><path d="M3.2 6.6 L4.2 21.2 Q4.3 22.6 5.7 22.6 H15.9 Q17.3 22.6 17.4 21.2 L18.4 6.6"/><path d="M7.8 9.6 V19.2 M10.8 9.6 V19.2 M13.8 9.6 V19.2"/></svg>
<div class="t" style="left:2667.0px;top:1180.5px;font-size:26px;font-weight:normal;color:#111;">Supprimer</div>
<div class="a" style="left:538px;top:1273px;width:2344px;height:120px;background:#f2f2f2"></div>
<div class="t" style="left:549.0px;top:1288.8px;font-size:25px;font-weight:bold;color:#2d2d2d;text-decoration:underline;text-decoration-thickness:2px;text-underline-offset:3px">PROD-3</div>
<div class="a" style="left:720px;top:1283px;width:97px;height:100px;background:#fff;border-top:1px solid #ccc"></div>
<svg style="left:720px;top:1283px" width="97" height="100" viewBox="0 0 97 100">
<defs><radialGradient id="ms1273" cx="0.3" cy="0.25" r="0.75"><stop offset="0" stop-color="#9a9a9c"/><stop offset="0.35" stop-color="#4a4a4c"/><stop offset="0.6" stop-color="#0e0e0e"/><stop offset="1" stop-color="#3a3a3c"/></radialGradient></defs>
<path d="M3.2 15.4 Q12 6 29.6 2.8 Q45 1.5 55.6 5 Q66 9 72.9 20.6 Q78 30 81.6 37 Q92 50 96.3 64.7 Q98 80 90.2 87.2 Q80 97 66.9 96.8 Q54 95 43.5 87.2 Q30 78 25 68.2 Q19 56 17.5 44 Q8 34 5.4 24.9 Q2 19 3.2 15.4 Z" fill="url(#ms1273)"/>
<path d="M17.5 44 Q30 56 45 60 Q60 64 72 62" fill="none" stroke="#1a1a1a" stroke-width="1"/>
<path d="M25.5 9 L36 7 L39 13 L28.5 15 Z" fill="#2a2a2a"/>
<path d="M34 12 L50 30" stroke="#2a2a2a" stroke-width="1"/>
<path d="M1 79.5 L17 76.3 L21 92 L5 96 Z" fill="#ececec" stroke="#777" stroke-width="0.8"/>
<path d="M8 87 L20.5 84.5 L22 93 L10 96.5 Z" fill="#3a3a3a"/>
<circle cx="6.5" cy="84" r="1.1" fill="#333"/><circle cx="15" cy="82" r="1.1" fill="#333"/>
</svg>
<div class="t" style="left:933.0px;top:1288.8px;font-size:25px;font-weight:normal;color:#1c1e21;letter-spacing:0.3px">Souris sans fil Paraître</div>
<div class="t" style="left:1741.0px;top:1288.8px;font-size:25px;font-weight:normal;color:#1c1e21;letter-spacing:0.3px">299,16 DH</div>
<div class="t" style="left:1954.0px;top:1288.8px;font-size:25px;font-weight:normal;color:#1c1e21;letter-spacing:0.3px">1</div>
<div class="a" style="left:2272px;top:1283px;width:138px;height:40px;border-radius:20px;background:#1db981"></div>
<div class="t" style="left:2286.5px;top:1290.5px;font-size:26px;font-weight:normal;color:#fff;letter-spacing:0.45px">En Stock</div>
<div class="a" style="left:2471px;top:1283px;width:149.5px;height:59.5px;border:2px solid #b3b3b3;border-radius:13px;background:#f4f4f4"></div>
<div class="a" style="left:2625px;top:1283px;width:175px;height:59.5px;border:2px solid #b3b3b3;border-radius:13px;background:#f4f4f4"></div>
<svg style="left:2482px;top:1300px" width="26" height="26" viewBox="0 0 26 26" fill="none" stroke="#111" stroke-width="1.9" stroke-linejoin="round"><path d="M1.4 24.6 L3.6 17.4 L18.6 2.4 L23.6 7.4 L8.6 22.4 Z M3.6 17.4 L8.6 22.4 M16.2 4.8 L21.2 9.8"/></svg>
<div class="t" style="left:2514.0px;top:1300.5px;font-size:26px;font-weight:normal;color:#111;letter-spacing:0.25px">Modifier</div>
<svg style="left:2638px;top:1300px" width="22" height="24" viewBox="0 0 22 24" fill="none" stroke="#111" stroke-width="1.9" stroke-linejoin="round" stroke-linecap="round"><rect x="1" y="3.4" width="19.6" height="3" rx="1.2"/><path d="M7.6 3.2 Q7.6 1 10.8 1 Q14 1 14 3.2"/><path d="M3.2 6.6 L4.2 21.2 Q4.3 22.6 5.7 22.6 H15.9 Q17.3 22.6 17.4 21.2 L18.4 6.6"/><path d="M7.8 9.6 V19.2 M10.8 9.6 V19.2 M13.8 9.6 V19.2"/></svg>
<div class="t" style="left:2667.0px;top:1300.5px;font-size:26px;font-weight:normal;color:#111;">Supprimer</div>
<div class="t" style="left:549.0px;top:1408.8px;font-size:25px;font-weight:bold;color:#2d2d2d;text-decoration:underline;text-decoration-thickness:2px;text-underline-offset:3px">PROD-3</div>
<svg style="left:720px;top:1393px" width="100" height="120" viewBox="0 0 100 120">
<defs>
<linearGradient id="gd1393" x1="0" y1="0" x2="0" y2="1"><stop offset="0" stop-color="#fff2b0"/><stop offset="0.5" stop-color="#e0b040"/><stop offset="1" stop-color="#9a6a10"/></linearGradient>
<linearGradient id="hs1393" x1="0" y1="0" x2="0" y2="1"><stop offset="0" stop-color="#3c3c3e"/><stop offset="0.5" stop-color="#222"/><stop offset="1" stop-color="#111"/></linearGradient>
<clipPath id="cp1393"><rect x="0" y="0" width="84.7" height="120"/></clipPath>
</defs>
<g clip-path="url(#cp1393)">
<g transform="translate(14.5 72.5) rotate(-28.5)">
<rect x="37" y="-4.2" width="60" height="8.4" fill="#1c1c1c"/>
<rect x="11" y="-8" width="31" height="16" rx="3" fill="#262628"/>
<path d="M11 -8 H37 V8 H11 Z" fill="url(#hs1393)"/>
<path d="M34 -7 V7 M36.5 -7 V7 M39 -6 V6" stroke="#111" stroke-width="0.9"/>
<rect x="-0.5" y="-5.2" width="13" height="10.4" rx="1" fill="url(#gd1393)"/>
<rect x="1.2" y="-2.6" width="9" height="5.2" fill="#3a2c10"/>
</g>
<g transform="translate(38.5 86.5) rotate(-28.5)">
<rect x="41" y="-4.2" width="60" height="8.4" fill="#1c1c1c"/>
<rect x="11" y="-8" width="35" height="16" rx="3" fill="#262628"/>
<path d="M11 -8 H41 V8 H11 Z" fill="url(#hs1393)"/>
<path d="M38 -7 V7 M40.5 -7 V7 M43 -6 V6" stroke="#111" stroke-width="0.9"/>
<rect x="-0.5" y="-5.2" width="13" height="10.4" rx="1" fill="url(#gd1393)"/>
<rect x="1.2" y="-2.6" width="9" height="5.2" fill="#3a2c10"/>
</g>
</g>
</svg>
<div class="t" style="left:933.0px;top:1408.8px;font-size:25px;font-weight:normal;color:#1c1e21;letter-spacing:0.3px">Câble HDMI Également</div>
<div class="t" style="left:1741.0px;top:1408.8px;font-size:25px;font-weight:normal;color:#1c1e21;letter-spacing:0.3px">295,06 DH</div>
<div class="t" style="left:1954.0px;top:1408.8px;font-size:25px;font-weight:normal;color:#1c1e21;letter-spacing:0.3px">28</div>
<div class="a" style="left:2272px;top:1403px;width:138px;height:40px;border-radius:20px;background:#1db981"></div>
<div class="t" style="left:2286.5px;top:1410.5px;font-size:26px;font-weight:normal;color:#fff;letter-spacing:0.45px">En Stock</div>
<div class="a" style="left:2471px;top:1403px;width:149.5px;height:59.5px;border:2px solid #b3b3b3;border-radius:13px;background:#f4f4f4"></div>
<div class="a" style="left:2625px;top:1403px;width:175px;height:59.5px;border:2px solid #b3b3b3;border-radius:13px;background:#f4f4f4"></div>
<svg style="left:2482px;top:1420px" width="26" height="26" viewBox="0 0 26 26" fill="none" stroke="#111" stroke-width="1.9" stroke-linejoin="round"><path d="M1.4 24.6 L3.6 17.4 L18.6 2.4 L23.6 7.4 L8.6 22.4 Z M3.6 17.4 L8.6 22.4 M16.2 4.8 L21.2 9.8"/></svg>
<div class="t" style="left:2514.0px;top:1420.5px;font-size:26px;font-weight:normal;color:#111;letter-spacing:0.25px">Modifier</div>
<svg style="left:2638px;top:1420px" width="22" height="24" viewBox="0 0 22 24" fill="none" stroke="#111" stroke-width="1.9" stroke-linejoin="round" stroke-linecap="round"><rect x="1" y="3.4" width="19.6" height="3" rx="1.2"/><path d="M7.6 3.2 Q7.6 1 10.8 1 Q14 1 14 3.2"/><path d="M3.2 6.6 L4.2 21.2 Q4.3 22.6 5.7 22.6 H15.9 Q17.3 22.6 17.4 21.2 L18.4 6.6"/><path d="M7.8 9.6 V19.2 M10.8 9.6 V19.2 M13.8 9.6 V19.2"/></svg>
<div class="t" style="left:2667.0px;top:1420.5px;font-size:26px;font-weight:normal;color:#111;">Supprimer</div>
<div class="a" style="left:538px;top:1513px;width:2344px;height:120px;background:#f2f2f2"></div>
<div class="t" style="left:549.0px;top:1528.8px;font-size:25px;font-weight:bold;color:#2d2d2d;text-decoration:underline;text-decoration-thickness:2px;text-underline-offset:3px">PROD-3</div>
<div class="a" style="left:720px;top:1523px;width:99px;height:100px;background:#fff;border-right:1px solid #d8d8d8"></div>
<svg style="left:720px;top:1523px" width="100" height="100" viewBox="0 0 100 100">
<defs><radialGradient id="lp1513" cx="0.5" cy="0.5" r="0.7"><stop offset="0" stop-color="#d8f0e6"/><stop offset="0.6" stop-color="#a9d8e0"/><stop offset="1" stop-color="#7cc0d8"/></radialGradient></defs>
<path d="M11.4 18 Q11.4 16.3 13 16.3 H85 Q86.7 16.3 86.7 18 V66 H11.4 Z" fill="#151515"/>
<rect x="12.9" y="19.1" width="72.8" height="41.5" fill="url(#lp1513)"/>
<circle cx="22" cy="34" r="5" fill="#f3ecc8" opacity=".7"/><circle cx="31" cy="47" r="6" fill="#8fc8dc" opacity=".8"/><circle cx="52" cy="29" r="5" fill="#f6f2d0" opacity=".6"/><circle cx="67" cy="41" r="6" fill="#e8f4d8" opacity=".6"/><circle cx="78" cy="30" r="4" fill="#bfe8f0" opacity=".7"/>
<circle cx="49.5" cy="63" r="0.9" fill="#888"/>
<path d="M10 66 H88.5 L96 100 H3 Z" fill="#1c1c1c"/>
<path d="M9 70 H89.5 M8 74 H90.5 M7 78 H91.5" stroke="#3a3a3a" stroke-width="1.6" stroke-dasharray="2.4 1"/>
</svg>
<div class="t" style="left:933.0px;top:1528.8px;font-size:25px;font-weight:normal;color:#1c1e21;letter-spacing:0.3px">Ordinateur portable Appartenir</div>
<div class="t" style="left:1741.0px;top:1528.8px;font-size:25px;font-weight:normal;color:#1c1e21;letter-spacing:0.3px">3.500,00 DH</div>
<div class="t" style="left:1954.0px;top:1528.8px;font-size:25px;font-weight:normal;color:#1c1e21;letter-spacing:0.3px">7</div>
<div class="a" style="left:2272px;top:1523px;width:138px;height:40px;border-radius:20px;background:#1db981"></div>
<div class="t" style="left:2286.5px;top:1530.5px;font-size:26px;font-weight:normal;color:#fff;letter-spacing:0.45px">En Stock</div>
<div class="a" style="left:2471px;top:1523px;width:149.5px;height:59.5px;border:2px solid #b3b3b3;border-radius:13px;background:#f4f4f4"></div>
<div class="a" style="left:2625px;top:1523px;width:175px;height:59.5px;border:2px solid #b3b3b3;border-radius:13px;background:#f4f4f4"></div>
<svg style="left:2482px;top:1540px" width="26" height="26" viewBox="0 0 26 26" fill="none" stroke="#111" stroke-width="1.9" stroke-linejoin="round"><path d="M1.4 24.6 L3.6 17.4 L18.6 2.4 L23.6 7.4 L8.6 22.4 Z M3.6 17.4 L8.6 22.4 M16.2 4.8 L21.2 9.8"/></svg>
<div class="t" style="left:2514.0px;top:1540.5px;font-size:26px;font-weight:normal;color:#111;letter-spacing:0.25px">Modifier</div>
<svg style="left:2638px;top:1540px" width="22" height="24" viewBox="0 0 22 24" fill="none" stroke="#111" stroke-width="1.9" stroke-linejoin="round" stroke-linecap="round"><rect x="1" y="3.4" width="19.6" height="3" rx="1.2"/><path d="M7.6 3.2 Q7.6 1 10.8 1 Q14 1 14 3.2"/><path d="M3.2 6.6 L4.2 21.2 Q4.3 22.6 5.7 22.6 H15.9 Q17.3 22.6 17.4 21.2 L18.4 6.6"/><path d="M7.8 9.6 V19.2 M10.8 9.6 V19.2 M13.8 9.6 V19.2"/></svg>
<div class="t" style="left:2667.0px;top:1540.5px;font-size:26px;font-weight:normal;color:#111;">Supprimer</div>
<div class="a" style="left:0;top:1548px;width:2970px;height:50px;background:linear-gradient(to top,rgba(0,0,0,0.035),rgba(0,0,0,0))"></div>
</div>
</body></html>
